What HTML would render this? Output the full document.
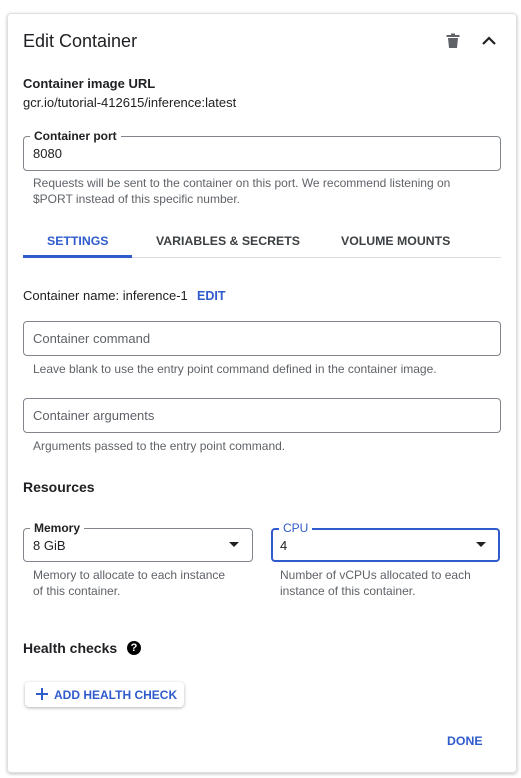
<!DOCTYPE html>
<html><head><meta charset="utf-8"><style>
*{margin:0;padding:0;box-sizing:border-box}
body{width:521px;height:778px;background:#fff;font-family:"Liberation Sans",Arial,sans-serif;color:#202124;position:relative;overflow:hidden}
.card{position:absolute;left:7px;top:13px;width:510px;height:760px;border:1px solid #e0e0e0;border-radius:4px;box-shadow:0 1px 3px rgba(0,0,0,.25)}
.t{position:absolute;white-space:nowrap;line-height:16px}
.box{position:absolute;border:1px solid #80868b;border-radius:4px}
.lab{position:absolute;top:-9px;left:6px;background:#fff;padding:0 4px;font-size:12px;font-weight:bold;line-height:16px}
.help{font-size:12px;color:#5f6368}
.blue{color:#2f5bcc}
.tri{position:absolute;width:0;height:0;border-left:5px solid transparent;border-right:5px solid transparent;border-top:5px solid #202124}
</style></head><body>
<div class="card"></div>
<div class="t" style="left:23px;top:31px;font-size:18px;line-height:20px">Edit Container</div>
<svg style="position:absolute;left:446px;top:33px" width="14" height="15" viewBox="0 0 14 15"><rect x="0.5" y="2" width="13" height="2" fill="#5f6368"/><rect x="5" y="0.5" width="4" height="2" fill="#5f6368"/><path d="M2 5h10l-1 10H3z" fill="#5f6368"/></svg>
<svg style="position:absolute;left:481px;top:36px" width="16" height="10" viewBox="0 0 16 10"><path d="M2 8L8 2l6 6" stroke="#202124" stroke-width="2.2" fill="none"/></svg>
<div class="t" style="left:23px;top:76px;font-size:13px;font-weight:bold">Container image URL</div>
<div class="t" style="left:23px;top:95px;font-size:13px">gcr.io/tutorial-412615/inference:latest</div>
<div class="box" style="left:23px;top:136px;width:478px;height:35px"><div class="lab">Container port</div></div>
<div class="t" style="left:33px;top:146px;font-size:13px">8080</div>
<div class="t help" style="left:33px;top:175px">Requests will be sent to the container on this port. We recommend listening on</div>
<div class="t help" style="left:33px;top:191px">$PORT instead of this specific number.</div>
<div class="t blue" style="left:47px;top:233px;font-size:12.3px;font-weight:bold">SETTINGS</div>
<div class="t" style="left:156px;top:233px;font-size:12.3px;font-weight:bold;color:#3c4043">VARIABLES &amp; SECRETS</div>
<div class="t" style="left:341px;top:233px;font-size:12.3px;font-weight:bold;color:#3c4043">VOLUME MOUNTS</div>
<div style="position:absolute;left:23px;top:257px;width:478px;height:1px;background:#dadce0"></div>
<div style="position:absolute;left:23px;top:255px;width:109px;height:3px;background:#2f5bcc"></div>
<div class="t" style="left:23px;top:288px;font-size:13px">Container name: inference-1</div>
<div class="t blue" style="left:197px;top:288px;font-size:12.5px;font-weight:bold">EDIT</div>
<div class="box" style="left:23px;top:321px;width:478px;height:35px"></div>
<div class="t" style="left:33px;top:331px;font-size:13px;color:#5f6368">Container command</div>
<div class="t help" style="left:33px;top:361px">Leave blank to use the entry point command defined in the container image.</div>
<div class="box" style="left:23px;top:398px;width:478px;height:35px"></div>
<div class="t" style="left:33px;top:408px;font-size:13px;color:#5f6368">Container arguments</div>
<div class="t help" style="left:33px;top:438px">Arguments passed to the entry point command.</div>
<div class="t" style="left:23px;top:479px;font-size:14px;font-weight:bold">Resources</div>
<div class="box" style="left:23px;top:528px;width:230px;height:34px"><div class="lab">Memory</div></div>
<div class="t" style="left:33px;top:538px;font-size:13px">8 GiB</div>
<div class="tri" style="left:229px;top:542px"></div>
<div class="box" style="left:271px;top:528px;width:229px;height:34px;border:2px solid #2f5bcc"><div class="lab blue" style="top:-10px;font-weight:normal">CPU</div></div>
<div class="t" style="left:280px;top:538px;font-size:13px">4</div>
<div class="tri" style="left:476px;top:542px"></div>
<div class="t help" style="left:33px;top:567px">Memory to allocate to each instance</div>
<div class="t help" style="left:33px;top:583px">of this container.</div>
<div class="t help" style="left:280px;top:567px">Number of vCPUs allocated to each</div>
<div class="t help" style="left:280px;top:583px">instance of this container.</div>
<div class="t" style="left:23px;top:640px;font-size:14px;font-weight:bold">Health checks</div>
<div style="position:absolute;left:127px;top:641px;width:14px;height:14px;border-radius:50%;background:#000;color:#fff;font-size:11px;font-weight:bold;text-align:center;line-height:14px">?</div>
<div style="position:absolute;left:25px;top:682px;width:159px;height:25px;border-radius:4px;background:#fff;box-shadow:0 1px 3px rgba(0,0,0,.3)"></div>
<svg style="position:absolute;left:36px;top:688px" width="12" height="12" viewBox="0 0 12 12"><path d="M6 0v12M0 6h12" stroke="#2f5bcc" stroke-width="2"/></svg>
<div class="t blue" style="left:54px;top:687px;font-size:12px;font-weight:bold">ADD HEALTH CHECK</div>
<div class="t blue" style="left:447px;top:733px;font-size:12.3px;font-weight:bold">DONE</div>
</body></html>
